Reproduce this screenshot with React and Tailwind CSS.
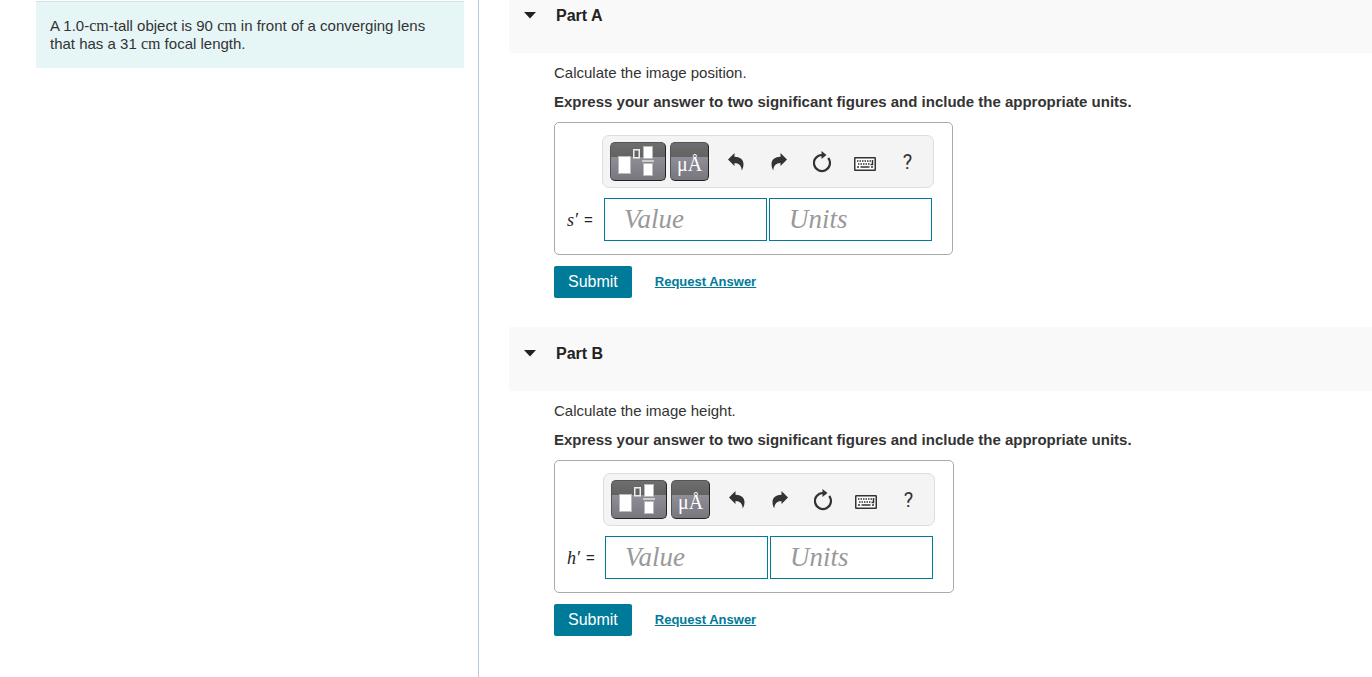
import { useState } from "react";

const parts = [
  { id: "a", title: "Part A", prompt: "Calculate the image position.", symbol: "s", labelWidth: "w-[47px]" },
  { id: "b", title: "Part B", prompt: "Calculate the image height.", symbol: "h", labelWidth: "w-[48px]" },
];

const Unit = ({ children }) => (
  <span className="font-['Liberation_Serif',serif] text-[16px] leading-none">{children}</span>
);

function TemplateIcon() {
  return (
    <svg width="40" height="32" viewBox="0 0 40 32" aria-hidden="true">
      <rect x="0.5" y="10.5" width="12" height="17" fill="#fff" stroke="#bbb" />
      <rect x="15.750" y="3.750" width="5.500" height="8" fill="none" stroke="#eee" strokeWidth="1.500" />
      <rect x="25.5" y="0.5" width="9" height="12" fill="#fff" stroke="#bbb" />
      <rect x="24" y="14" width="12" height="2" fill="#ccc" />
      <rect x="25.5" y="17.5" width="9" height="12" fill="#fff" stroke="#bbb" />
    </svg>
  );
}

function ArrowIcon({ flip }) {
  return (
    <svg width="16" height="20" viewBox="0 0 16 20" className={flip ? "-scale-x-100" : ""} aria-hidden="true">
      <path d="M0 7.5 6.5 1v3.800c5.500 0 9 3 9 7.200 0 2.500-.6 4.500-1.800 6.500C13.700 14 11 11 6.500 11v3z" fill="#333" />
    </svg>
  );
}

function ResetIcon() {
  return (
    <svg width="18" height="22" viewBox="0 0 18 22" aria-hidden="true">
      <path d="M15.200 7A8 8 0 1 1 9 4" fill="none" stroke="#333" strokeWidth="2.200" />
      <path d="M8.500 0 13.500 4 8.500 8z" fill="#333" />
    </svg>
  );
}

function KeyboardIcon() {
  return (
    <svg width="22" height="14" viewBox="0 0 22 14" aria-hidden="true">
      <rect x="0.750" y="0.750" width="20.500" height="12.500" rx="0.500" fill="#fff" stroke="#333" strokeWidth="1.500" />
      <path d="M3 4h14M4 7h12" stroke="#333" strokeWidth="1.500" strokeDasharray="1.500 1" />
      <path d="M3 10h2m1.500 0h9m1.500 0h2M18.500 3v4.500h-2" fill="none" stroke="#333" strokeWidth="1.500" />
    </svg>
  );
}

const darkButton =
  "flex h-[39px] items-center justify-center rounded-[5px] border border-[#555] border-r-[#222] border-b-[#222] bg-[linear-gradient(#6e6e6e,#626262_38%,#8f8e99_38%,#78777d)] text-white";
const iconButton = "flex h-[39px] w-[43px] items-center justify-center";

function Toolbar() {
  return (
    <div className="flex h-[53px] w-[332px] items-center rounded-[7px] border border-[#ddd] bg-[#f4f4f4] pl-[7px]">
      <button type="button" aria-label="Templates" className={`${darkButton} mr-1 w-14`}>
        <TemplateIcon />
      </button>
      <button
        type="button"
        aria-label="Symbols"
        className={`${darkButton} mr-[5px] w-[39px] pt-1 font-['Liberation_Serif',serif] text-[20px] leading-6`}
      >
        μÅ
      </button>
      <button type="button" aria-label="Undo" className={iconButton}>
        <ArrowIcon />
      </button>
      <button type="button" aria-label="Redo" className={iconButton}>
        <ArrowIcon flip />
      </button>
      <button type="button" aria-label="Reset" className={iconButton}>
        <ResetIcon />
      </button>
      <button type="button" aria-label="Keyboard shortcuts" className={`${iconButton} pt-1`}>
        <KeyboardIcon />
      </button>
      <button type="button" aria-label="Help" className={`${iconButton} font-[Roboto,sans-serif] text-[20px] text-[#333]`}>
        ?
      </button>
    </div>
  );
}

const field =
  "h-[43px] w-[163px] border border-[#007a99] bg-white pl-[19px] font-['Liberation_Serif',serif] text-[27px] italic placeholder:text-[#999] outline-none";

function Part({ id, title, prompt, symbol, labelWidth }) {
  const [open, setOpen] = useState(true);

  return (
    <section>
      <h2 className="h-16 bg-[#f9f9f9] pt-[17px] text-base leading-5 font-bold text-[#222]">
        <button type="button" className="flex items-center gap-5 pl-[15px]" onClick={() => setOpen(!open)}>
          <svg width="12" height="8" viewBox="0 0 12 8" aria-hidden="true">
            <path d="M0 0h12L6 6.500z" fill="#222" />
          </svg>
          {title}
        </button>
      </h2>
      {open && (
        <form
          className="flex flex-col items-start gap-[11px] pt-[11px] pb-[29px] pl-[45px]"
          onSubmit={(e) => e.preventDefault()}
        >
          <p>{prompt}</p>
          <p className="font-bold">Express your answer to two significant figures and include the appropriate units.</p>
          <div className="flex h-[133px] items-end rounded-[5px] border border-[#aaa] pr-[18px] pb-[13px]">
            <label
              htmlFor={`value-${id}`}
              className={`${labelWidth} flex h-[43px] items-center pl-3 text-[#222]`}
            >
              <span className="mr-[6px] font-['Liberation_Serif',serif] text-[18px] italic">{symbol}′</span>=
            </label>
            <div className="flex flex-col gap-[10px]">
              <Toolbar />
              <div className="flex gap-[2px] pl-[2px]">
                <input id={`value-${id}`} placeholder="Value" className={field} />
                <input aria-label="Units" placeholder="Units" className={field} />
              </div>
            </div>
          </div>
          <div className="flex items-center gap-[23px]">
            <button type="submit" className="h-8 rounded-[2px] bg-[#007a99] px-[14px] text-base text-white">
              Submit
            </button>
            <a href="#request" className="text-[13px] font-bold text-[#007a99] underline">
              Request Answer
            </a>
          </div>
        </form>
      )}
    </section>
  );
}

export default function App() {
  return (
    <div className="flex min-h-screen overflow-hidden bg-white font-['Liberation_Sans',Arial,sans-serif] text-[15px] leading-[18px] text-[#333]">
      <aside className="w-[479px] shrink-0 border-r border-[#b5cbdb] pt-px pr-[14px] pl-9">
        <p className="border-t border-[#d5e3e3] bg-[#e6f6f6] px-[14px] py-[15px]">
          A 1.0-<Unit>cm</Unit>-tall object is 90 <Unit>cm</Unit> in front of a converging lens that has a 31{" "}
          <Unit>cm</Unit> focal length.
        </p>
      </aside>
      <main className="-mt-[11px] min-w-0 flex-1 pl-[30px]">
        {parts.map((part) => (
          <Part key={part.id} {...part} />
        ))}
      </main>
    </div>
  );
}
